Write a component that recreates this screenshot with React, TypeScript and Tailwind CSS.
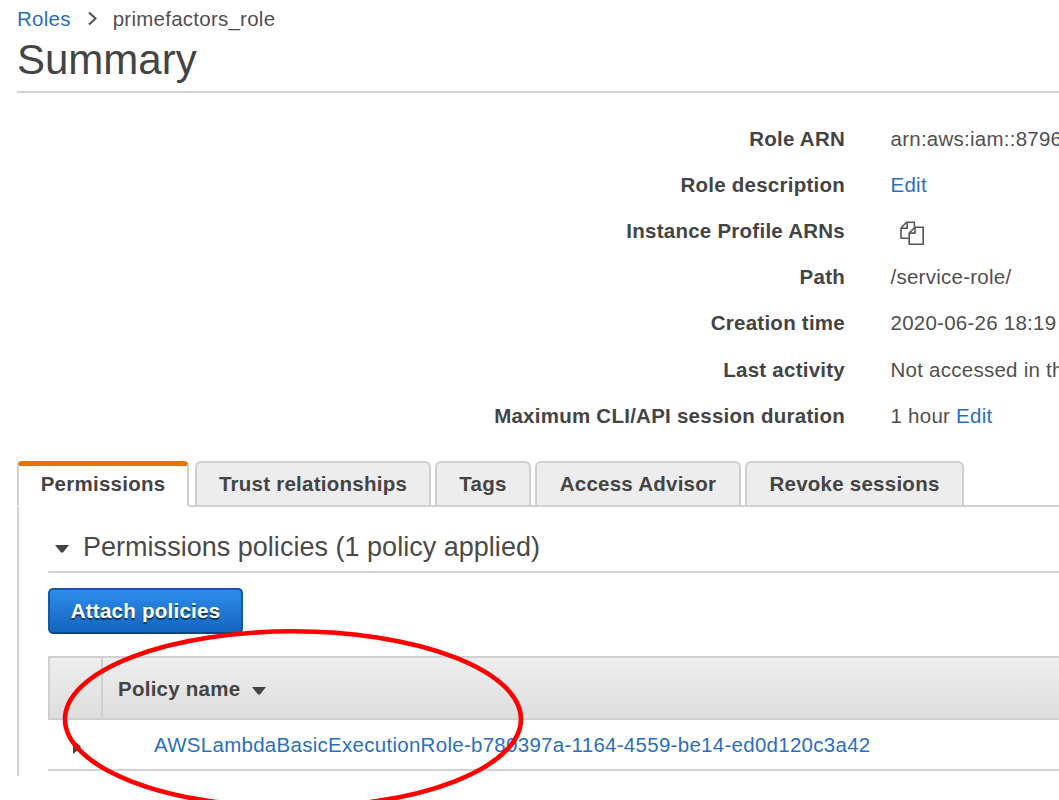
import React from "react";

const link = "text-[#2a6ec4]";

function Row({ label, children }: { label: string; children: React.ReactNode }) {
  return (
    <div className="flex h-[46.1px] items-center">
      <div className="w-[845px] shrink-0 text-right font-bold text-[#444]">{label}</div>
      <div className="ml-[45.5px]">{children}</div>
    </div>
  );
}

function Tab({ label, className }: { label: string; className: string }) {
  return (
    <div
      className={`flex h-[44px] shrink-0 items-center justify-center rounded-t-[6px] border-2 border-b-0 border-[#cfcfcf] bg-[#ededed] ${className}`}
    >
      {label}
    </div>
  );
}

function CopyIcon() {
  return (
    <svg width="26" height="26" viewBox="0 0 26 26" fill="none" stroke="#555" strokeWidth="1.6" strokeLinejoin="round" className="block">
      <path d="M9.7 18.3H2V8L7.6 2.2H15.4V6.8" />
      <path d="M8.2 2.4V8.2H2.2" />
      <path d="M10.2 13L15.8 7.3H24.2V24.2H10.2Z" />
      <path d="M16 7.4V13.1H10.4" />
    </svg>
  );
}

export default function App() {
  return (
    <div className="relative h-[800px] w-[1059px] overflow-hidden bg-white font-['Liberation_Sans',Arial,sans-serif] text-[20.5px] leading-[24px] whitespace-nowrap text-[#505050]">
      <div className="flex h-[38px] items-center pl-[17px] tracking-[0.25px]">
        <span className={link}>Roles</span>
        <svg width="12" height="16" viewBox="0 0 12 16" fill="none" stroke="#505050" strokeWidth="2" className="ml-[16px] -mt-[2px]">
          <path d="M2 2.5L8.5 8.5L2 14.5" />
        </svg>
        <span className="ml-[14px]">primefactors_role</span>
      </div>
      <h1 className="ml-[17px] h-[55px] border-b-2 border-[#d2d2d2] text-[42px] leading-[44px] text-[#444]">Summary</h1>

      <div className="pt-[23px] tracking-[0.25px]">
        <Row label="Role ARN">arn:aws:iam::8796</Row>
        <Row label="Role description"><span className={link}>Edit</span></Row>
        <Row label="Instance Profile ARNs"><div className="pt-[3px] pl-[8px]"><CopyIcon /></div></Row>
        <Row label="Path">/service-role/</Row>
        <Row label="Creation time">2020-06-26 18:19</Row>
        <Row label="Last activity">Not accessed in th</Row>
        <Row label="Maximum CLI/API session duration">1 hour <span className={link}>Edit</span></Row>
      </div>

      <div className="mt-[22px] flex h-[46px] items-start pl-[17px] font-bold tracking-[0.25px] text-[#444]">
        <div className="flex h-[46px] w-[172px] shrink-0 items-center justify-center rounded-t-[5px] rounded-br-[2px] border-x-2 border-t-[5px] border-b-2 border-x-[#cfcfcf] border-t-[#e07700] border-b-white pb-[3px]">
          Permissions
        </div>
        <div className="flex h-[46px] flex-1 gap-[4px] border-b-2 border-[#d0d0d0] pl-[6px]">
          <Tab label="Trust relationships" className="w-[236px]" />
          <Tab label="Tags" className="w-[96px]" />
          <Tab label="Access Advisor" className="w-[206px]" />
          <Tab label="Revoke sessions" className="w-[219px]" />
        </div>
      </div>

      <div className="ml-[17px] h-[269px] border-l-2 border-[#d2d2d2] pl-[29px]">
        <div className="flex h-[66px] items-center border-b-2 border-[#d3d3d3] pt-[16px]">
          <svg width="14" height="8" viewBox="0 0 14 8" className="ml-[7px] mt-[4px]">
            <path d="M0 0H14L8 7.5H6Z" fill="#444" />
          </svg>
          <h2 className="ml-[14px] text-[27px] leading-[32px] tracking-[0.02px] text-[#4a4a4a]">Permissions policies (1 policy applied)</h2>
        </div>
        <button className="mt-[15px] flex h-[46px] w-[195px] items-center justify-center rounded-[5px] border-2 border-[#1557a0] border-b-[#0d4583] bg-linear-to-b from-[#2e8cec] to-[#1365bd] font-bold tracking-[0.25px] text-white [text-shadow:0_2px_1px_rgba(0,0,0,0.55)]">
          Attach policies
        </button>
        <div className="mt-[22px] flex h-[64px] border-y-2 border-l-2 border-[#d0d0d0] bg-linear-to-b from-[#eeeeee] to-[#dedede] font-bold tracking-[0.25px] text-[#444]">
          <div className="w-[53px] border-r-2 border-[#d0d0d0]" />
          <div className="flex items-center pl-[15px] pt-[2px]">
            Policy name
            <svg width="14" height="8" viewBox="0 0 14 8" className="ml-[12px] mt-[4px]">
              <path d="M0 0H14L8 7.5H6Z" fill="#444" />
            </svg>
          </div>
        </div>
        <div className="flex h-[51px] items-center border-b-2 border-[#d3d3d3] pt-[2px]">
          <svg width="8" height="14" viewBox="0 0 8 14" className="ml-[25px] mt-[4px]">
            <path d="M0 0L7.5 6V8L0 14Z" fill="#444" />
          </svg>
          <span className={`ml-[73px] tracking-[0.28px] ${link}`}>AWSLambdaBasicExecutionRole-b780397a-1164-4559-be14-ed0d120c3a42</span>
        </div>
      </div>

      <svg width="470" height="190" viewBox="0 0 470 190" fill="none" className="pointer-events-none absolute top-[620px] left-[58px]">
        <ellipse cx="235" cy="99.3" rx="228" ry="88" stroke="#ff0000" strokeWidth="4.6" />
      </svg>
    </div>
  );
}
